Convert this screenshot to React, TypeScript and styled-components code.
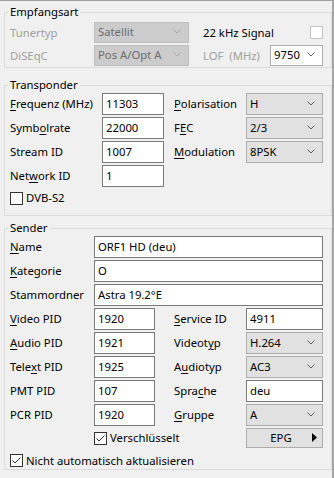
import styled, { createGlobalStyle } from 'styled-components';

const GlobalStyle = createGlobalStyle`
  html, body {
    margin: 0;
    padding: 0;
    background: #f0f0f0;
  }
  * {
    box-sizing: border-box;
  }
  body {
    font-family: 'Noto Sans', 'DejaVu Sans', sans-serif;
    font-size: 11.3px;
    color: #000;
  }
`;

const Window = styled.div`
  width: 334px;
  height: 478px;
  background: #f0f0f0;
  border-top: 1px solid #a0a0a0;
  border-right: 2px solid #a6a6a6;
  padding: 3px 0 0 4px;
`;

const Group = styled.fieldset<{ $top?: number; $pad: string }>`
  margin: ${(p) => p.$top ?? 0}px 0 0 0;
  padding: ${(p) => p.$pad};
  border: 1px solid #dcdcdc;
  min-width: 0;
`;

const Legend = styled.legend`
  margin-left: -2px;
  padding: 0 2px;
  line-height: 16px;
`;

const FieldGrid = styled.div<{ $cols: string; $row: number; $gap: number }>`
  display: grid;
  grid-template-columns: ${(p) => p.$cols};
  grid-auto-rows: ${(p) => p.$row}px;
  row-gap: ${(p) => p.$gap}px;
  align-items: center;
`;

const Label = styled.span<{ $disabled?: boolean }>`
  color: ${(p) => (p.$disabled ? '#a0a0a0' : '#000')};
  white-space: pre;
  line-height: 16px;
`;

const Key = styled.span`
  text-decoration: underline;
  text-underline-offset: 2px;
`;

const TextBox = styled.input<{ $span?: string }>`
  grid-column: ${(p) => p.$span ?? 'auto'};
  height: 100%;
  width: 100%;
  margin: 0;
  padding: 0 0 2px 3px;
  border: 1px solid #7a7a7a;
  background: #fff;
  font: inherit;
  color: #000;
  outline: none;
`;

const SelectBox = styled.div<{ $variant: 'normal' | 'disabled' | 'white' }>`
  height: 100%;
  display: flex;
  align-items: center;
  justify-content: space-between;
  padding: 0 7px 2px 3px;
  border: 1px solid ${(p) => (p.$variant === 'disabled' ? '#bfbfbf' : '#adadad')};
  background: ${(p) =>
    p.$variant === 'disabled' ? '#cccccc' : p.$variant === 'white' ? '#ffffff' : '#e1e1e1'};
  color: ${(p) => (p.$variant === 'disabled' ? '#6d6d6d' : '#000')};
  white-space: nowrap;
`;

const CheckBox = styled.span<{ $muted?: boolean }>`
  width: 13px;
  height: 13px;
  flex: none;
  display: inline-flex;
  align-items: center;
  justify-content: center;
  background: #fff;
  border: 1px solid ${(p) => (p.$muted ? '#c4c4c4' : '#333')};
`;

const CheckRow = styled.div<{ $span?: string; $top?: number; $h: number }>`
  grid-column: ${(p) => p.$span ?? 'auto'};
  margin-top: ${(p) => p.$top ?? 0}px;
  height: ${(p) => p.$h}px;
  display: flex;
  align-items: center;
  gap: 3px;
  white-space: nowrap;
`;

const EndCell = styled.div`
  display: flex;
  justify-content: flex-end;
  align-items: center;
`;

const Button = styled.div`
  height: 20px;
  display: flex;
  align-items: center;
  padding: 0 5px 1px 0;
  border: 1px solid #adadad;
  background: #e1e1e1;
`;

const ButtonText = styled.span`
  flex: 1;
  text-align: center;
  padding-left: 3px;
`;

const Chevron = ({ muted }: { muted?: boolean }) => (
  <svg width="8" height="5" viewBox="0 0 8 5">
    <polyline
      points="0.5,0.5 4,4 7.5,0.5"
      fill="none"
      stroke={muted ? '#a8a8a8' : '#606060'}
      strokeWidth="1"
    />
  </svg>
);

const Select = ({ value, variant = 'normal' }: { value: string; variant?: 'normal' | 'disabled' | 'white' }) => (
  <SelectBox $variant={variant}>
    <span>{value}</span>
    <Chevron muted={variant === 'disabled'} />
  </SelectBox>
);

const Check = ({ checked, muted }: { checked?: boolean; muted?: boolean }) => (
  <CheckBox $muted={muted}>
    {checked && (
      <svg width="11" height="11" viewBox="0 0 11 11">
        <polyline points="1.5,5.5 4,8 9.5,2.5" fill="none" stroke="#333" strokeWidth="1" />
      </svg>
    )}
  </CheckBox>
);

export default function App() {
  return (
    <>
      <GlobalStyle />
      <Window>
        <Group $pad="2px 8px 1px 5px">
          <Legend>Empfangsart</Legend>
          <FieldGrid $cols="84px 95px 14px 67px 53px" $row={21} $gap={2}>
            <Label $disabled>Tunertyp</Label>
            <Select value="Satellit" variant="disabled" />
            <span />
            <Label>22 kHz Signal</Label>
            <EndCell>
              <Check muted />
            </EndCell>
            <Label $disabled>DiSEqC</Label>
            <Select value="Pos A/Opt A" variant="disabled" />
            <span />
            <Label $disabled>{'LOF  (MHz)'}</Label>
            <Select value="9750" variant="white" />
          </FieldGrid>
        </Group>

        <Group $top={9} $pad="0 8px 8px 5px">
          <Legend>Transponder</Legend>
          <FieldGrid $cols="92px 62px 10px 72px 77px" $row={22} $gap={2}>
            <Label>
              <Key>F</Key>requenz (MHz)
            </Label>
            <TextBox readOnly defaultValue="11303" />
            <span />
            <Label>
              <Key>P</Key>olarisation
            </Label>
            <Select value="H" />

            <Label>
              Symb<Key>o</Key>lrate
            </Label>
            <TextBox readOnly defaultValue="22000" />
            <span />
            <Label>
              F<Key>E</Key>C
            </Label>
            <Select value="2/3" />

            <Label>Stream ID</Label>
            <TextBox readOnly defaultValue="1007" />
            <span />
            <Label>
              <Key>M</Key>odulation
            </Label>
            <Select value="8PSK" />

            <Label>
              Net<Key>w</Key>ork ID
            </Label>
            <TextBox readOnly defaultValue="1" />
          </FieldGrid>
          <CheckRow $top={2} $h={18}>
            <Check />
            <Label>DVB-S2</Label>
          </CheckRow>
        </Group>

        <Group $top={4} $pad="0 8px 0 5px">
          <Legend>Sender</Legend>
          <FieldGrid $cols="84px 61px 19px 72px 77px" $row={22} $gap={2}>
            <Label>
              <Key>N</Key>ame
            </Label>
            <TextBox readOnly defaultValue="ORF1 HD (deu)" $span="2 / -1" />

            <Label>
              <Key>K</Key>ategorie
            </Label>
            <TextBox readOnly defaultValue="O" $span="2 / -1" />

            <Label>Stammordner</Label>
            <TextBox readOnly defaultValue="Astra 19.2°E" $span="2 / -1" />

            <Label>
              <Key>V</Key>ideo PID
            </Label>
            <TextBox readOnly defaultValue="1920" />
            <span />
            <Label>
              <Key>S</Key>ervice ID
            </Label>
            <TextBox readOnly defaultValue="4911" />

            <Label>
              <Key>A</Key>udio PID
            </Label>
            <TextBox readOnly defaultValue="1921" />
            <span />
            <Label>
              Videot<Key>y</Key>p
            </Label>
            <Select value="H.264" />

            <Label>
              Tele<Key>x</Key>t PID
            </Label>
            <TextBox readOnly defaultValue="1925" />
            <span />
            <Label>
              A<Key>u</Key>diotyp
            </Label>
            <Select value="AC3" />

            <Label>PMT PID</Label>
            <TextBox readOnly defaultValue="107" />
            <span />
            <Label>
              Spra<Key>c</Key>he
            </Label>
            <TextBox readOnly defaultValue="deu" />

            <Label>PCR PID</Label>
            <TextBox readOnly defaultValue="1920" />
            <span />
            <Label>
              <Key>G</Key>ruppe
            </Label>
            <Select value="A" />
          </FieldGrid>
          <FieldGrid $cols="84px 61px 19px 72px 77px" $row={20} $gap={0} style={{ marginTop: 2 }}>
            <CheckRow $span="2 / 5" $h={20}>
              <Check checked />
              <Label>Verschlüsselt</Label>
            </CheckRow>
            <Button>
              <ButtonText>EPG</ButtonText>
              <svg width="5" height="9" viewBox="0 0 5 9">
                <polygon points="0,0 5,4.5 0,9" fill="#000" />
              </svg>
            </Button>
          </FieldGrid>
          <CheckRow $top={4} $h={17}>
            <Check checked />
            <Label>Nicht automatisch aktualisieren</Label>
          </CheckRow>
        </Group>
      </Window>
    </>
  );
}
